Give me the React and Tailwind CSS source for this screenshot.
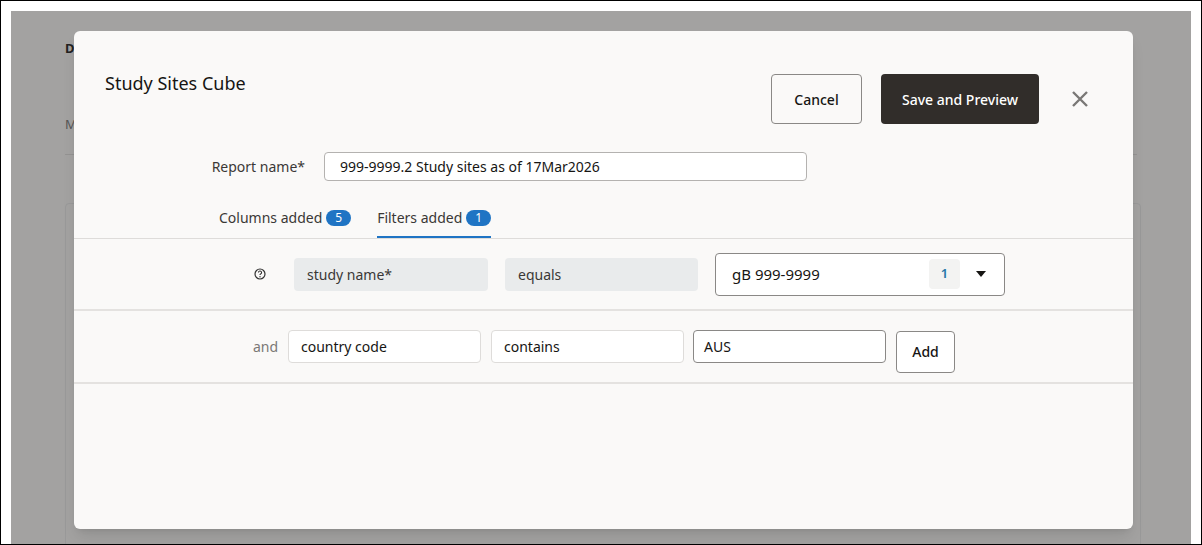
export default function App() {
  const font = { fontFamily: '"Noto Sans", Inter, sans-serif' };
  return (
    <div className="w-[1202px] h-[545px] border border-black bg-white relative overflow-hidden" style={font}>
      {/* dimmed page behind */}
      <div className="absolute left-[10px] top-[10px] right-[10px] bottom-0 bg-[#a3a2a1]">
        <div className="ml-[54px] mt-[28px] text-[13px] font-bold text-[#222]">D</div>
        <div className="ml-[54px] mt-[56px] text-[13px] text-[#555]">M</div>
        <div className="mx-[54px] mt-[20px] h-px bg-[#949392]" />
        <div className="ml-[54px] mr-[50px] mt-[48px] h-[400px] border border-[#999] rounded" />
      </div>
      {/* modal */}
      <div className="absolute left-[73px] top-[30px] w-[1059px] h-[498px] bg-[#faf9f8] rounded-md shadow-lg text-[#161513]">
        <div className="flex items-start pl-[31px] pr-[44px] pt-[43px]">
          <div className="text-[18px] leading-[22px] mt-[-2px]">Study Sites Cube</div>
          <div className="ml-auto flex items-center">
            <button className="w-[91px] h-[50px] border border-[#8a8886] rounded text-[14px] font-medium bg-[#faf9f8]">Cancel</button>
            <button className="ml-[19px] w-[158px] h-[50px] rounded bg-[#312d2a] text-white text-[14px] font-medium">Save and Preview</button>
            <svg className="ml-[32px]" width="18" height="18" viewBox="0 0 18 18"><path d="M2 2L16 16M16 2L2 16" stroke="#7a7876" strokeWidth="2.4" /></svg>
          </div>
        </div>
        <div className="flex items-center mt-[28px]">
          <div className="w-[231px] text-right text-[14px] text-[#3a3836]">Report name*</div>
          <div className="ml-[19px] w-[483px] h-[29px] border border-[#b4b2b0] rounded bg-white px-[15px] flex items-center text-[14px]">999-9999.2 Study sites as of 17Mar2026</div>
        </div>
        <div className="flex mt-[26px] pl-[145px] border-b border-[#dedcda] text-[14px] text-[#3a3836]">
          <div className="flex items-center gap-[4px] pb-[10px]">Columns added <span className="bg-[#1f74c4] text-white text-[12px] rounded-full px-[9px] leading-[16px]">5</span></div>
          <div className="ml-[26px] flex items-center gap-[4px] pb-[8px] border-b-2 border-[#1f74c4]">Filters added <span className="bg-[#1f74c4] text-white text-[12px] rounded-full px-[9px] leading-[16px]">1</span></div>
        </div>
        <div className="h-[72px] border-b-2 border-[#e4e2e0] flex items-center text-[14px]">
          <div className="w-[193px] flex justify-end pr-[1px]">
            <svg width="12" height="12" viewBox="0 0 12 12"><circle cx="6" cy="6" r="5" fill="none" stroke="#333" strokeWidth="1.2" /><path d="M4.4 4.6a1.6 1.6 0 1 1 2.2 1.5c-.5.2-.6.5-.6.9" fill="none" stroke="#333" strokeWidth="1.1" /><circle cx="6" cy="8.7" r=".7" fill="#333" /></svg>
          </div>
          <div className="ml-[27px] w-[194px] h-[33px] rounded bg-[#e9ebec] px-[13px] flex items-center text-[#3a3836]">study name*</div>
          <div className="ml-[17px] w-[193px] h-[33px] rounded bg-[#e9ebec] px-[13px] flex items-center text-[#3a3836]">equals</div>
          <div className="ml-[17px] w-[290px] h-[43px] rounded border border-[#8a8886] bg-white flex items-center pl-[16px] pr-[18px]">
            <span className="text-[15px]">gB 999-9999</span>
            <span className="ml-auto w-[31px] h-[30px] bg-[#f3f3f2] rounded flex items-center justify-center text-[#2777a8] text-[13px] font-semibold">1</span>
            <svg className="ml-[16px]" width="10" height="6" viewBox="0 0 10 6"><path d="M0 0H10L5 6Z" fill="#161513" /></svg>
          </div>
        </div>
        <div className="h-[73px] border-b-2 border-[#e4e2e0] flex items-center text-[14px]">
          <div className="w-[204px] text-right text-[#7a7876]">and</div>
          <div className="ml-[10px] w-[193px] h-[33px] rounded border border-[#dedcda] bg-white px-[12px] flex items-center">country code</div>
          <div className="ml-[10px] w-[193px] h-[33px] rounded border border-[#dedcda] bg-white px-[12px] flex items-center">contains</div>
          <div className="ml-[9px] w-[193px] h-[33px] rounded border border-[#8a8886] bg-white px-[10px] flex items-center">AUS</div>
          <button className="ml-[10px] mt-[10px] w-[59px] h-[42px] rounded border border-[#8a8886] bg-white text-[14px] font-medium">Add</button>
        </div>
      </div>
    </div>
  );
}
